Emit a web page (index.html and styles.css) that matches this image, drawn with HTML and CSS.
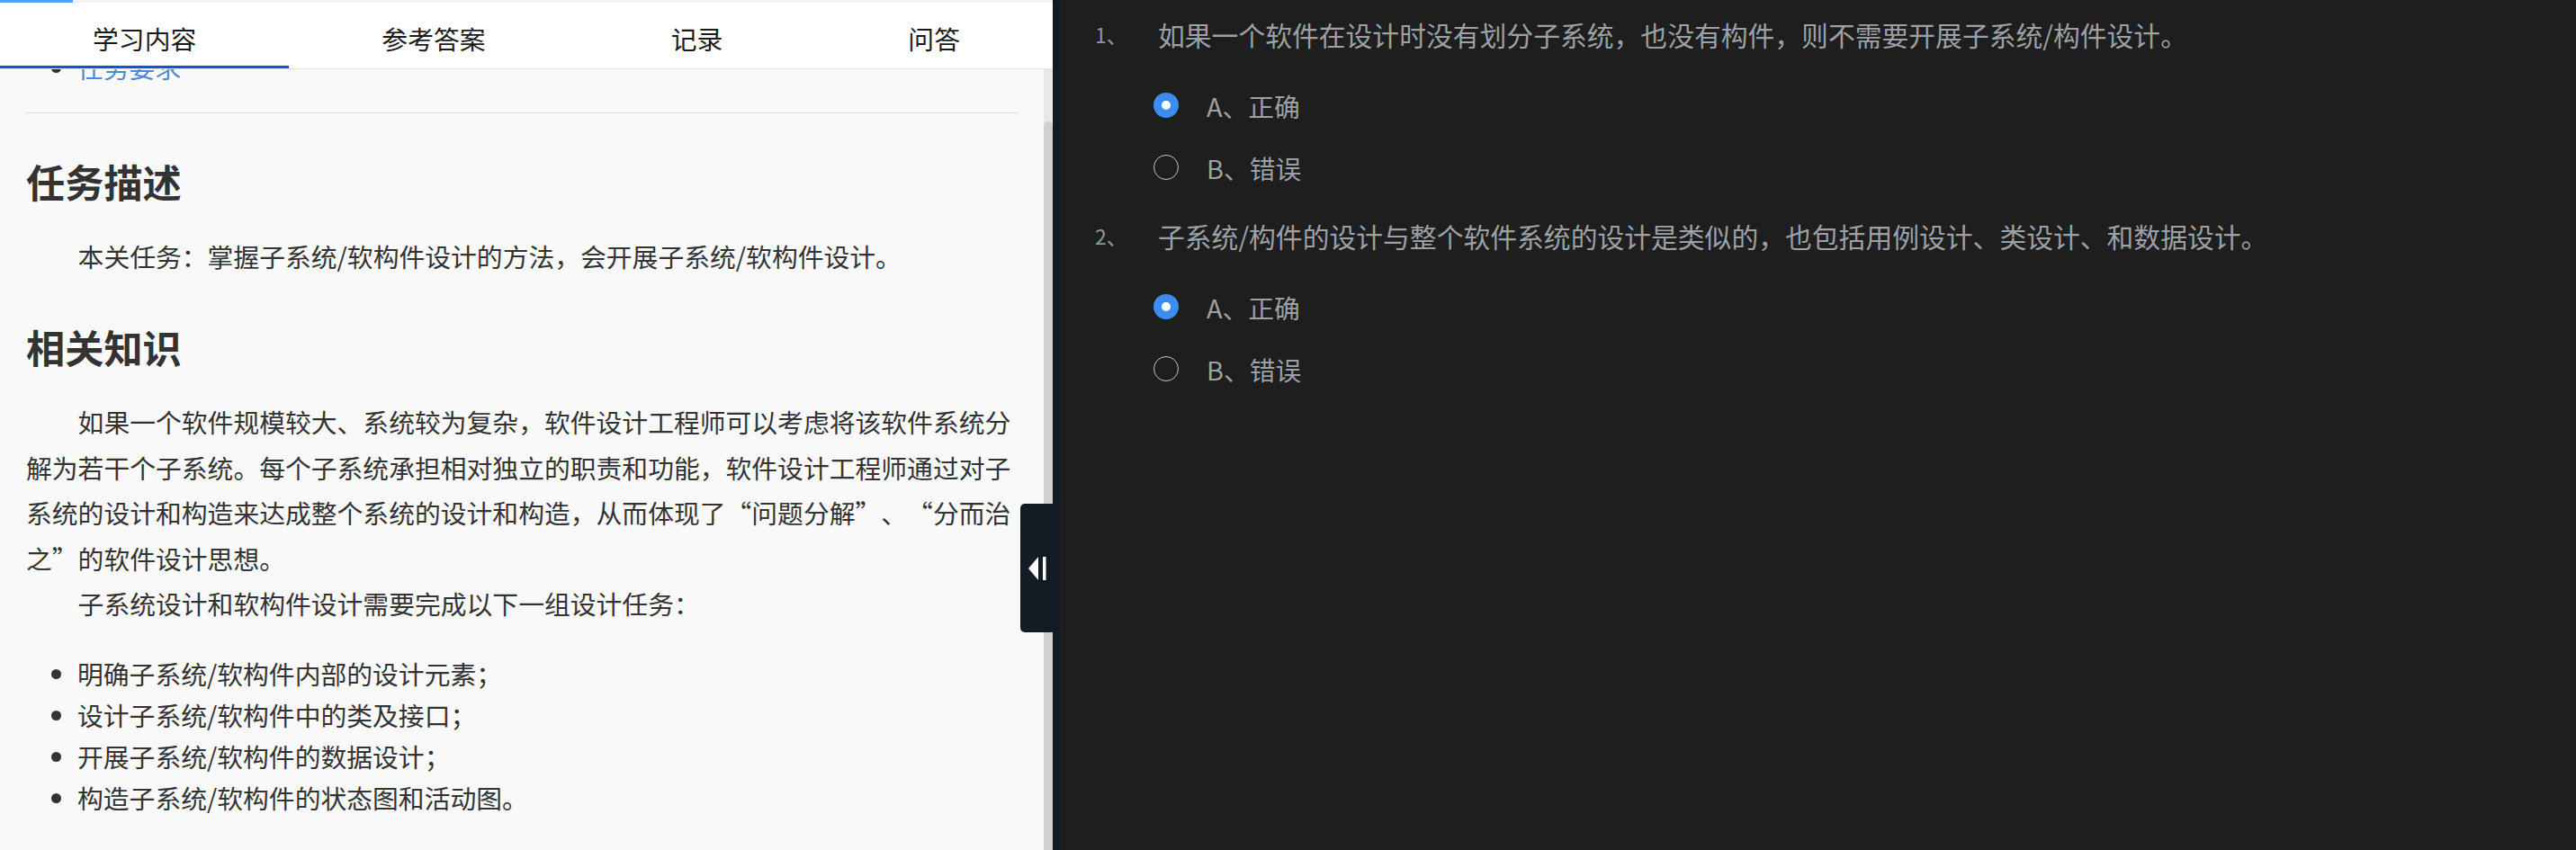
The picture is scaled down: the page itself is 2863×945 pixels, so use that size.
FILE: index.html
```html
<!DOCTYPE html>
<html lang="zh-CN">
<head>
<meta charset="utf-8">
<title>学习内容</title>
<link rel="stylesheet" href="styles.css">
</head>
<body>
<div class="page">
  <section class="left">
    <div class="progress"><div class="progress-fill"></div></div>
    <nav class="tabs">
      <div class="tab active">学习内容</div>
      <div class="tab">参考答案</div>
      <div class="tab">记录</div>
      <div class="tab">问答</div>
    </nav>
    <div class="body">
      <div class="scroll">
        <div class="content">
          <ul class="toc">
            <li><a class="toc-link">任务要求</a></li>
          </ul>
          <hr class="rule">
          <h2 class="heading first">任务描述</h2>
          <p class="para">本关任务：掌握子系统/软构件设计的方法，会开展子系统/软构件设计。</p>
          <h2 class="heading">相关知识</h2>
          <p class="para">如果一个软件规模较大、系统较为复杂，软件设计工程师可以考虑将该软件系统分解为若干个子系统。每个子系统承担相对独立的职责和功能，软件设计工程师通过对子系统的设计和构造来达成整个系统的设计和构造，从而体现了“问题分解”、“分而治之”的软件设计思想。</p>
          <p class="para tight">子系统设计和软构件设计需要完成以下一组设计任务：</p>
          <ul class="tasks">
            <li>明确子系统/软构件内部的设计元素；</li>
            <li>设计子系统/软构件中的类及接口；</li>
            <li>开展子系统/软构件的数据设计；</li>
            <li>构造子系统/软构件的状态图和活动图。</li>
          </ul>
        </div>
      </div>
      <div class="scrollbar"><div class="thumb"></div></div>
    </div>
    <div class="toggle">
      <svg class="toggle-icon" width="36" height="143" viewBox="0 0 36 143">
        <polygon points="9,72 20,59 20,85" fill="#ffffff"/>
        <rect x="25" y="59" width="3.5" height="26" fill="#ffffff"/>
      </svg>
    </div>
  </section>
  <div class="splitter"></div>
  <section class="right">
    <div class="question">
      <div class="q-title"><span class="q-num">1、</span><span class="q-text">如果一个软件在设计时没有划分子系统，也没有构件，则不需要开展子系统/构件设计。</span></div>
      <div class="options">
        <div class="option"><span class="radio checked"></span><span class="opt-label">A、正确</span></div>
        <div class="option"><span class="radio"></span><span class="opt-label">B、错误</span></div>
      </div>
    </div>
    <div class="question">
      <div class="q-title"><span class="q-num">2、</span><span class="q-text">子系统/构件的设计与整个软件系统的设计是类似的，也包括用例设计、类设计、和数据设计。</span></div>
      <div class="options">
        <div class="option"><span class="radio checked"></span><span class="opt-label">A、正确</span></div>
        <div class="option"><span class="radio"></span><span class="opt-label">B、错误</span></div>
      </div>
    </div>
  </section>
</div>
</body>
</html>
```
FILE: styles.css
```css
html, body {
  margin: 0;
  padding: 0;
  height: 945px;
  overflow: hidden;
}
body {
  font-family: "Noto Sans CJK SC", "Noto Sans", sans-serif;
  background: #1e1e1e;
  text-spacing-trim: space-all;
}
.page {
  display: flex;
  width: 2863px;
  height: 945px;
}
.left {
  position: relative;
  width: 1170px;
  flex: none;
  display: flex;
  flex-direction: column;
  background: #f9f9f9;
}
.progress {
  height: 3px;
  background: #f3f3f3;
  flex: none;
}
.progress-fill {
  width: 81px;
  height: 3px;
  background: #4da3ff;
}
.tabs {
  display: flex;
  height: 73px;
  background: #ffffff;
  border-bottom: 1px solid #e2e2e2;
  flex: none;
}
.tab {
  flex: 1 1 auto;
  position: relative;
  display: flex;
  align-items: center;
  justify-content: center;
  padding-top: 5px;
  box-sizing: border-box;
  font-size: 28.8px;
  color: #1a1a1a;
  white-space: nowrap;
}
.tab.active::after {
  content: "";
  position: absolute;
  left: 0;
  right: 0;
  bottom: 0;
  height: 3px;
  background: #0d57d4;
}
.body {
  flex: 1;
  display: flex;
  min-height: 0;
}
.scroll {
  flex: 1;
  overflow: hidden;
  padding: 0 29px;
}
.content {
  margin-top: -25px;
  color: #333333;
}
.scrollbar {
  width: 10px;
  flex: none;
  background: #e8e8e8;
  display: flex;
  flex-direction: column;
}
.thumb {
  margin-top: 58px;
  flex: 1;
  background: #d0d0d0;
  border-radius: 5px 5px 0 0;
}
.toc {
  margin: 0;
  padding-left: 57px;
  font-size: 28.8px;
  line-height: 46px;
}
.toc-link {
  color: #4a8ad0;
}
.rule {
  margin: 27px 0 0;
  border: 0;
  border-top: 1px solid #dcdcdc;
  height: 0;
}
.heading {
  margin: 44px 0 0;
  font-size: 43.2px;
  line-height: 62px;
  font-weight: bold;
  color: #333333;
}
.heading.first {
  margin-top: 44px;
}
.para {
  margin: 28px 0 0;
  font-size: 28.8px;
  line-height: 50.4px;
  text-indent: 2em;
  color: #333333;
}
.para.tight {
  margin-top: 0;
}
.tasks {
  margin: 30px 0 0;
  padding-left: 57px;
  font-size: 28.8px;
  line-height: 46px;
  color: #333333;
}
.toggle {
  position: absolute;
  right: 0;
  top: 560px;
  width: 36px;
  height: 143px;
  background: #131c25;
  border-radius: 5px 0 0 5px;
}
.toggle-icon {
  display: block;
}
.splitter {
  width: 7px;
  flex: none;
  background: #121b24;
}
.right {
  flex: 1;
  background: #1e1e1e;
  padding: 13px 0 0 40px;
  color: #9ca1a6;
}
.question + .question {
  margin-top: 26px;
}
.q-title {
  display: flex;
  align-items: center;
  height: 50px;
}
.q-num {
  width: 70px;
  flex: none;
  font-size: 23px;
  color: #90969c;
}
.q-text {
  font-size: 29.8px;
  white-space: nowrap;
}
.options {
  margin-top: 29px;
  padding-left: 65px;
}
.option {
  display: flex;
  align-items: center;
  height: 50px;
}
.option + .option {
  margin-top: 19px;
}
.radio {
  width: 28px;
  height: 28px;
  box-sizing: border-box;
  border-radius: 50%;
  border: 1.5px solid #c4c4c4;
  flex: none;
  margin-right: 31px;
  position: relative;
}
.radio.checked {
  border: none;
  background: #3d8cf0;
}
.radio.checked::after {
  content: "";
  position: absolute;
  left: 9px;
  top: 9px;
  width: 10px;
  height: 10px;
  border-radius: 50%;
  background: #ffffff;
}
.opt-label {
  font-size: 28.8px;
}
```
